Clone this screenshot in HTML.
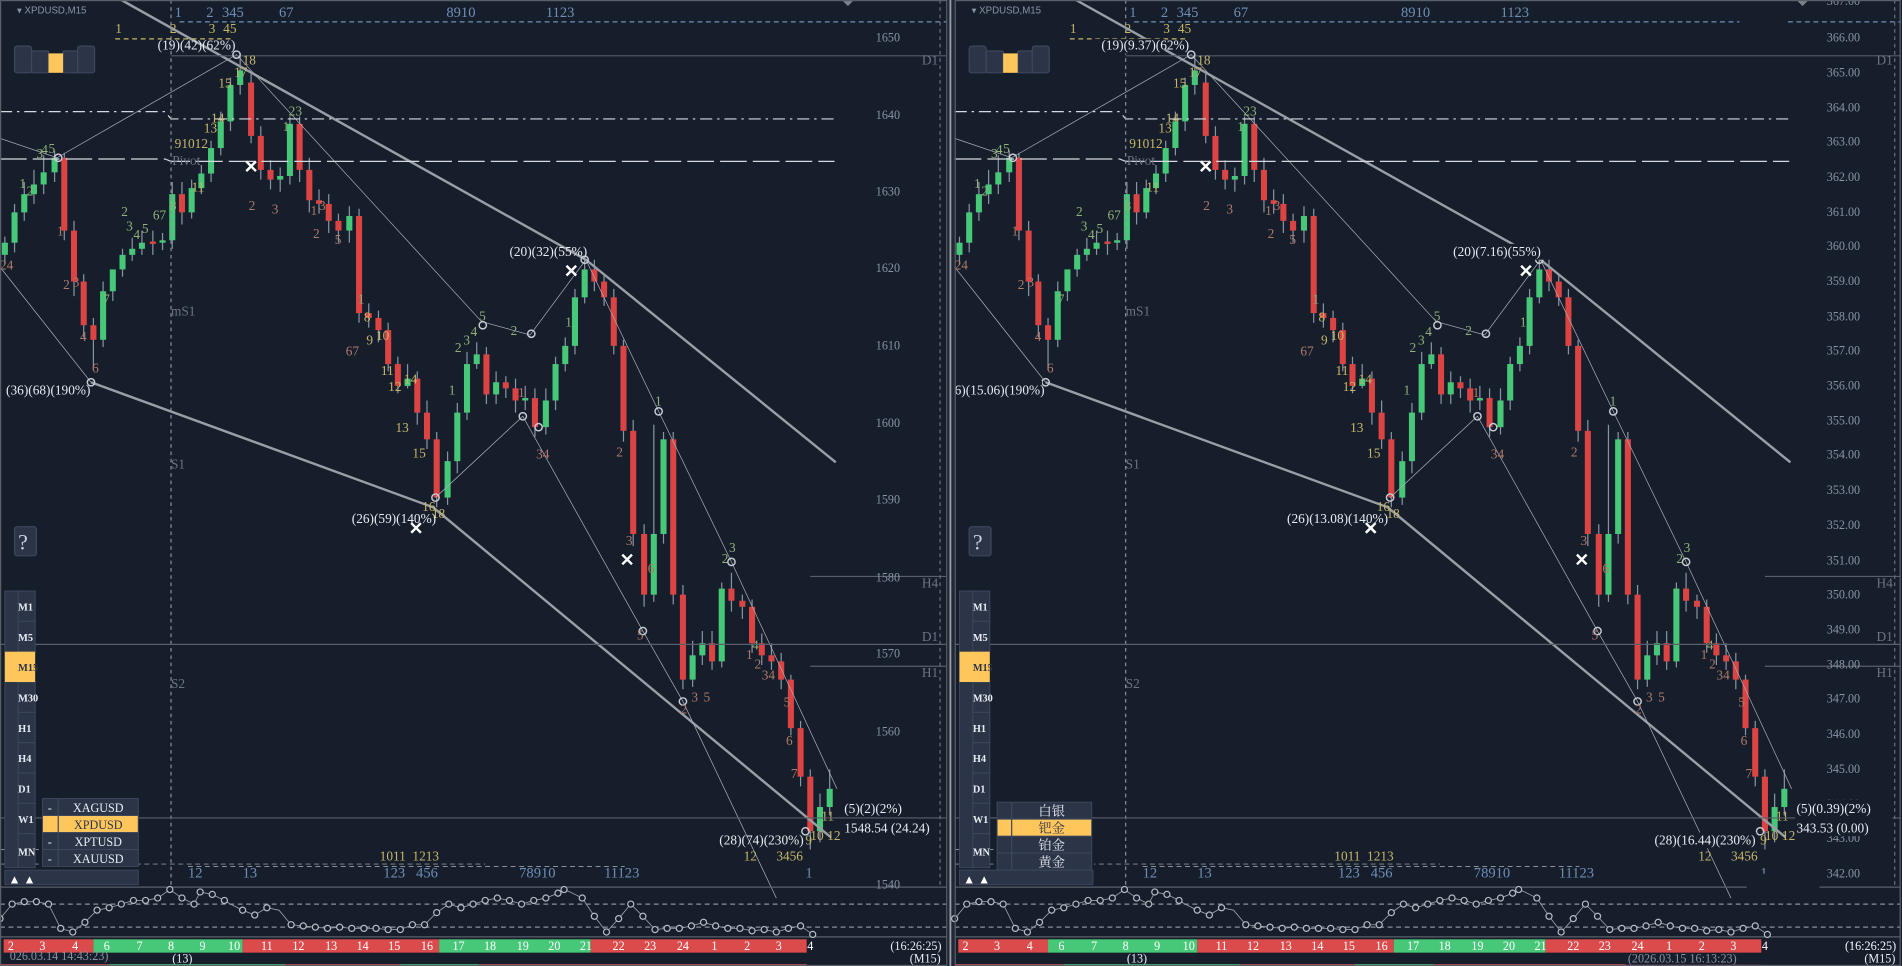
<!DOCTYPE html>
<html><head><meta charset="utf-8"><style>
html,body{margin:0;padding:0;background:#161e2b;overflow:hidden}
svg{display:block}
text{font-family:"Liberation Serif","Noto Serif CJK SC",serif}
.ax{fill:#8a93a6;font-size:10px}
.g{fill:#c8b66a;font-size:11px}
.gr{fill:#8fb27a;font-size:11px}
.r{fill:#b07a6a;font-size:11px}
.b{fill:#6f8fb7;font-size:12px}
.w{fill:#e8ecf3;font-size:11px}
.lbl{fill:#6d7585;font-size:11px}
</style></head><body>
<svg width="1902" height="966" viewBox="0 0 1568 796" preserveAspectRatio="none" xmlns="http://www.w3.org/2000/svg">
<defs>
<g id="cd">
<path stroke="#8a93a6" stroke-width="1" fill="none" d="M4 195V218M12 168V208M20 150V182M28 140V168M36 128V160M45 124V150M53 126V198M61 182V244M69 226V278M77 262V305M85 232V286M93 230V248M101 205V228M109 196V215M117 190V210M126 190V210M134 192V206M142 150V205M150 150V185M158 148V180M166 136V160M174 116V150M182 92V128M190 64V108M198 44V78M207 60V118M215 104V148M223 132V156M231 138V158M239 96V152M247 96V150M255 130V175M263 156V176M271 160V192M279 176V200M288 170V200M296 172V266M304 250V270M312 256V282M320 266V306M328 294V324M336 300V320M344 306V350M352 330V370M360 356V418M369 372V416M377 332V390M385 290V346M393 282V304M401 286V333M409 306V333M417 310V328M425 312V340M433 318V338M441 320V360M450 320V358M458 294V338M466 278V306M474 238V292M482 214V250M490 214V240M498 226V252M506 238V292M514 280V364M522 346V450M531 432V500M539 350V496M547 356V448M555 356V498M563 482V568M571 528V566M579 520V548M587 520V552M595 480V550M603 472V504M612 490V510M620 494V538M628 522V548M636 530V552M644 538V568M652 556V606M660 594V648M668 634V700M676 654V694M684 634V672"/>
<g fill="#47c878">
<rect x="1.5" y="200" width="5" height="10"/><rect x="9.5" y="175" width="5" height="25"/><rect x="17.5" y="160" width="5" height="15"/><rect x="25.5" y="152" width="5" height="8"/><rect x="33.5" y="142" width="5" height="10"/><rect x="42.5" y="130" width="5" height="12"/><rect x="82.5" y="240" width="5" height="40"/><rect x="90.5" y="222" width="5" height="18"/><rect x="98.5" y="210" width="5" height="12"/><rect x="106.5" y="205" width="5" height="5"/><rect x="114.5" y="200" width="5" height="5"/><rect x="131.5" y="198" width="5" height="2"/><rect x="139.5" y="160" width="5" height="38"/><rect x="155.5" y="155" width="5" height="20"/><rect x="163.5" y="143" width="5" height="12"/><rect x="171.5" y="122" width="5" height="21"/><rect x="179.5" y="100" width="5" height="22"/><rect x="187.5" y="70" width="5" height="30"/><rect x="195.5" y="58" width="5" height="12"/><rect x="228.5" y="145" width="5" height="3"/><rect x="236.5" y="102" width="5" height="43"/><rect x="285.5" y="178" width="5" height="12"/><rect x="333.5" y="312" width="5" height="6"/><rect x="366.5" y="380" width="5" height="30"/><rect x="374.5" y="340" width="5" height="40"/><rect x="382.5" y="300" width="5" height="40"/><rect x="390.5" y="292" width="5" height="8"/><rect x="406.5" y="315" width="5" height="10"/><rect x="430.5" y="328" width="5" height="2"/><rect x="447.5" y="330" width="5" height="22"/><rect x="455.5" y="300" width="5" height="30"/><rect x="463.5" y="285" width="5" height="15"/><rect x="471.5" y="245" width="5" height="40"/><rect x="479.5" y="222" width="5" height="23"/><rect x="536.5" y="440" width="5" height="50"/><rect x="544.5" y="362" width="5" height="78"/><rect x="568.5" y="540" width="5" height="20"/><rect x="576.5" y="530" width="5" height="10"/><rect x="592.5" y="485" width="5" height="60"/><rect x="673.5" y="665" width="5" height="20"/><rect x="681.5" y="650" width="5" height="15"/>
</g>
<g fill="#dc4343">
<rect x="50.5" y="130" width="5" height="60"/><rect x="58.5" y="190" width="5" height="42"/><rect x="66.5" y="232" width="5" height="36"/><rect x="74.5" y="268" width="5" height="12"/><rect x="123.5" y="199" width="5" height="2"/><rect x="147.5" y="160" width="5" height="15"/><rect x="204.5" y="68" width="5" height="44"/><rect x="212.5" y="112" width="5" height="28"/><rect x="220.5" y="140" width="5" height="8"/><rect x="244.5" y="102" width="5" height="38"/><rect x="252.5" y="140" width="5" height="25"/><rect x="260.5" y="165" width="5" height="3"/><rect x="268.5" y="168" width="5" height="14"/><rect x="276.5" y="182" width="5" height="8"/><rect x="293.5" y="178" width="5" height="80"/><rect x="301.5" y="258" width="5" height="4"/><rect x="309.5" y="262" width="5" height="10"/><rect x="317.5" y="272" width="5" height="28"/><rect x="325.5" y="300" width="5" height="18"/><rect x="341.5" y="312" width="5" height="28"/><rect x="349.5" y="340" width="5" height="22"/><rect x="357.5" y="362" width="5" height="48"/><rect x="398.5" y="292" width="5" height="33"/><rect x="414.5" y="315" width="5" height="5"/><rect x="422.5" y="320" width="5" height="10"/><rect x="438.5" y="328" width="5" height="24"/><rect x="487.5" y="222" width="5" height="10"/><rect x="495.5" y="232" width="5" height="13"/><rect x="503.5" y="245" width="5" height="40"/><rect x="511.5" y="285" width="5" height="70"/><rect x="519.5" y="355" width="5" height="85"/><rect x="528.5" y="440" width="5" height="50"/><rect x="552.5" y="362" width="5" height="128"/><rect x="560.5" y="490" width="5" height="70"/><rect x="584.5" y="530" width="5" height="15"/><rect x="600.5" y="485" width="5" height="10"/><rect x="609.5" y="495" width="5" height="5"/><rect x="617.5" y="500" width="5" height="30"/><rect x="625.5" y="530" width="5" height="10"/><rect x="633.5" y="540" width="5" height="5"/><rect x="641.5" y="545" width="5" height="15"/><rect x="649.5" y="560" width="5" height="40"/><rect x="657.5" y="600" width="5" height="40"/><rect x="665.5" y="640" width="5" height="45"/>
</g>
<!-- shared overlays -->
<g fill="none">
<path stroke="#9a9ea6" stroke-width="2" d="M100 0L483 214L689 381M75 315L357 418L685 690"/>
<path stroke="#a8acb4" stroke-width="0.6" d="M0 114L47 130L195 45L397 265L437 276L483 214L543 339L603 463L690 650M0 220L75 315M359 410L431 343L530 520L563 578L640 740"/>
<path stroke="#d6d9df" stroke-width="1" stroke-dasharray="10,4,2,4" d="M0 92H136L141 98H688"/>
<path stroke="#d6d9df" stroke-width="1" stroke-dasharray="22,5" d="M0 131H136L141 133H688"/>
<path stroke="#8a909a" stroke-width="1" stroke-dasharray="3,3" d="M141 0V730"/>
<path stroke="#6f8fb7" stroke-width="1" stroke-dasharray="4,3" d="M148 18H780"/>
<path stroke="#c8b66a" stroke-width="1" stroke-dasharray="4,3" d="M95 32H190"/>
<path stroke="#555b66" stroke-width="1" d="M141 46H780"/>
<path stroke="#8a909a" stroke-width="0.8" stroke-dasharray="4,3" d="M0 700H100M0 712H400M155 714H515"/>
</g>
<g fill="none" stroke="#c8ccd4" stroke-width="1.2">
<circle cx="48" cy="130" r="3"/><circle cx="195" cy="45" r="3"/><circle cx="75" cy="315" r="3"/><circle cx="398" cy="268" r="3"/><circle cx="438" cy="275" r="3"/><circle cx="431" cy="343" r="3"/><circle cx="482" cy="214" r="3"/><circle cx="543" cy="339" r="3"/><circle cx="563" cy="578" r="3"/><circle cx="603" cy="463" r="3"/><circle cx="530" cy="520" r="3"/><circle cx="664" cy="685" r="3"/><circle cx="444" cy="352" r="3"/><circle cx="359" cy="410" r="3"/>
</g>
<g stroke="#ffffff" stroke-width="2">
<path d="M203 133l8 8M211 133l-8 8M339 431l8 8M347 431l-8 8M467 219l8 8M475 219l-8 8M513 457l8 8M521 457l-8 8"/>
</g>
<g>
<text x="95" y="27" class="g">1</text><text x="140" y="27" class="g">2</text><text x="172" y="27" class="g">3</text><text x="184" y="27" class="g">45</text>
<text x="144" y="14" class="b">1</text><text x="170" y="14" class="b">2</text><text x="183" y="14" class="b">345</text><text x="230" y="14" class="b">67</text><text x="368" y="14" class="b">8910</text><text x="450" y="14" class="b">1123</text>
<text x="200" y="53" class="g">18</text><text x="193" y="63" class="g">17</text><text x="180" y="72" class="g">15</text><text x="174" y="101" class="g">14</text><text x="168" y="109" class="g">13</text><text x="144" y="122" class="g">91012</text><text x="158" y="158" class="g">11</text><text x="140" y="173" class="gr">8</text>
<text x="238" y="95" class="gr">23</text><text x="233" y="108" class="gr">1</text><text x="256" y="177" class="r">1</text><text x="258" y="196" class="r">2</text><text x="276" y="201" class="r">5</text><text x="224" y="176" class="r">3</text><text x="263" y="173" class="r">3</text><text x="205" y="173" class="r">2</text>
<text x="30" y="130" class="gr">3</text><text x="34" y="127" class="gr">4</text><text x="40" y="126" class="gr">5</text><text x="16" y="155" class="gr">1</text><text x="22" y="161" class="gr">2</text><text x="47" y="194" class="r">1</text><text x="52" y="238" class="r">2</text><text x="60" y="236" class="r">3</text><text x="66" y="281" class="r">4</text><text x="76" y="307" class="r">6</text><text x="85" y="250" class="gr">7</text><text x="100" y="178" class="gr">2</text><text x="104" y="190" class="gr">3</text><text x="110" y="197" class="gr">4</text><text x="117" y="192" class="gr">5</text><text x="126" y="181" class="gr">67</text><text x="0" y="222" class="r">24</text>
<text x="285" y="293" class="r">67</text><text x="295" y="250" class="gr">1</text><text x="300" y="265" class="g">8</text><text x="310" y="280" class="g">10</text><text x="302" y="284" class="g">9</text><text x="314" y="309" class="g">11</text><text x="320" y="322" class="g">12</text><text x="333" y="316" class="g">14</text><text x="326" y="356" class="g">13</text><text x="340" y="377" class="g">15</text><text x="348" y="421" class="g">16</text><text x="356" y="427" class="g">18</text>
<text x="370" y="325" class="gr">1</text><text x="375" y="290" class="gr">2</text><text x="382" y="284" class="gr">3</text><text x="388" y="277" class="gr">4</text><text x="395" y="264" class="gr">5</text><text x="421" y="276" class="gr">2</text><text x="466" y="269" class="gr">1</text><text x="442" y="378" class="r">34</text><text x="427" y="327" class="r">1</text><text x="508" y="376" class="r">2</text><text x="516" y="449" class="r">3</text><text x="525" y="527" class="r">5</text><text x="534" y="472" class="r">6</text><text x="540" y="334" class="gr">1</text><text x="595" y="464" class="gr">2</text><text x="601" y="455" class="gr">3</text><text x="561" y="588" class="r">2</text><text x="580" y="578" class="r">5</text><text x="570" y="578" class="r">3</text><text x="615" y="543" class="r">1</text><text x="622" y="551" class="r">2</text><text x="628" y="560" class="r">34</text><text x="620" y="535" class="gr">4</text><text x="646" y="582" class="r">5</text><text x="648" y="614" class="r">6</text><text x="652" y="641" class="r">7</text>
<text x="668" y="692" class="g">10</text><text x="682" y="692" class="g">12</text><text x="677" y="676" class="g">11</text><text x="664" y="696" class="g">9</text>
<text x="313" y="709" class="g">1011</text><text x="340" y="709" class="g">1213</text><text x="613" y="709" class="g">12</text><text x="640" y="709" class="g">3456</text>
<text x="155" y="723" class="b">12</text><text x="200" y="723" class="b">13</text><text x="316" y="723" class="b">123</text><text x="343" y="723" class="b">456</text><text x="428" y="723" class="b">78910</text><text x="498" y="723" class="b">11123</text><text x="664" y="723" class="b">1</text>
<text x="141" y="260" class="lbl">mS1</text><text x="141" y="386" class="lbl">S1</text><text x="141" y="567" class="lbl">S2</text><text x="142" y="136" class="lbl">Pivot</text>
</g>
<!-- pane chrome -->
<g>
<path stroke="#5a606a" fill="none" d="M668 475H780M0 531H780M668 549H780M0 674H780"/>
<text x="760" y="53" class="lbl" font-size="9">D1</text><text x="760" y="484" class="lbl" font-size="9">H4</text><text x="760" y="528" class="lbl" font-size="9">D1</text><text x="760" y="558" class="lbl" font-size="9">H1</text>
<path stroke="#6a707a" stroke-dasharray="3,3" d="M775 0V730"/>
<g fill="#2c3548" stroke="#3d475c"><rect x="12" y="38" width="14" height="22" rx="2"/><rect x="26" y="42" width="14" height="18" rx="1"/><rect x="52" y="42" width="14" height="18" rx="1"/><rect x="64" y="38" width="14" height="22" rx="2"/></g>
<rect x="40" y="44" width="12" height="16" fill="#ffc65c"/>
<rect x="12" y="434" width="18" height="24" rx="2" fill="#2c3548" stroke="#3d475c"/><text x="15" y="453" fill="#c9d2e0" font-size="18">?</text>
<g fill="#2c3548" stroke="#3d475c" stroke-width="0.8">
<rect x="4" y="487" width="11" height="228"/><rect x="15" y="487" width="14" height="25"/><rect x="15" y="512" width="14" height="25"/><rect x="15" y="562" width="14" height="25"/><rect x="15" y="587" width="14" height="25"/><rect x="15" y="612" width="14" height="25"/><rect x="15" y="637" width="14" height="25"/><rect x="15" y="662" width="14" height="25"/><rect x="15" y="687" width="14" height="28"/>
</g>
<rect x="4" y="537" width="25" height="25" fill="#ffc65c"/>
<g fill="#e8ecf3" font-size="8.5" font-weight="bold"><text x="15" y="503">M1</text><text x="15" y="528">M5</text><text x="15" y="553" fill="#2c3548">M15</text><text x="15" y="578">M30</text><text x="15" y="603">H1</text><text x="15" y="628">H4</text><text x="15" y="653">D1</text><text x="15" y="678">W1</text><text x="15" y="705">MN</text></g>
<g fill="#2c3548" stroke="#3d475c" stroke-width="0.8"><rect x="4" y="717" width="110" height="12"/></g>
<text x="7" y="728" fill="#fff" font-size="10">▲ ▲</text>
</g>
<!-- oscillator -->
<g>
<path stroke="#5a606a" fill="none" d="M0 731H780M0 772H780"/>
<path stroke="#8a909a" stroke-dasharray="4,3" fill="none" d="M0 745H780M0 764H780"/>
<polyline fill="none" stroke="#9aa0aa" stroke-width="0.7" points="0,757 10,745 20,743 30,743 40,745 50,765 60,768 70,760 80,750 90,748 100,745 110,742 120,742 130,740 140,733 150,740 160,745 165,735 175,737 185,742 190,745 200,750 210,754 220,748 230,750 240,762 250,763 260,764 270,765 280,764 290,765 300,765 310,765 320,766 330,766 340,762 350,762 360,752 370,745 380,748 390,745 400,742 410,740 420,742 430,745 440,742 450,740 460,736 465,733 470,735 480,740 490,755 500,768 510,757 520,745 530,755 540,766 550,765 560,765 570,763 580,760 590,763 600,765 610,765 620,767 630,766 640,768 650,765 660,763 670,770"/>
<g fill="#161e2b" stroke="#b8bcc4" stroke-width="1">
<circle cx="0" cy="757" r="2.5"/><circle cx="10" cy="745" r="2.5"/><circle cx="20" cy="743" r="2.5"/><circle cx="30" cy="743" r="2.5"/><circle cx="40" cy="745" r="2.5"/><circle cx="50" cy="765" r="2.5"/><circle cx="60" cy="768" r="2.5"/><circle cx="70" cy="760" r="2.5"/><circle cx="80" cy="750" r="2.5"/><circle cx="90" cy="748" r="2.5"/><circle cx="100" cy="745" r="2.5"/><circle cx="110" cy="742" r="2.5"/><circle cx="120" cy="742" r="2.5"/><circle cx="130" cy="740" r="2.5"/><circle cx="140" cy="733" r="2.5"/><circle cx="150" cy="740" r="2.5"/><circle cx="160" cy="745" r="2.5"/><circle cx="165" cy="735" r="2.5"/><circle cx="175" cy="737" r="2.5"/><circle cx="185" cy="742" r="2.5"/><circle cx="200" cy="750" r="2.5"/><circle cx="210" cy="754" r="2.5"/><circle cx="220" cy="748" r="2.5"/><circle cx="240" cy="762" r="2.5"/><circle cx="250" cy="763" r="2.5"/><circle cx="260" cy="764" r="2.5"/><circle cx="270" cy="765" r="2.5"/><circle cx="280" cy="764" r="2.5"/><circle cx="290" cy="765" r="2.5"/><circle cx="300" cy="765" r="2.5"/><circle cx="310" cy="765" r="2.5"/><circle cx="320" cy="766" r="2.5"/><circle cx="330" cy="766" r="2.5"/><circle cx="340" cy="762" r="2.5"/><circle cx="350" cy="762" r="2.5"/><circle cx="360" cy="752" r="2.5"/><circle cx="370" cy="745" r="2.5"/><circle cx="380" cy="748" r="2.5"/><circle cx="390" cy="745" r="2.5"/><circle cx="400" cy="742" r="2.5"/><circle cx="410" cy="740" r="2.5"/><circle cx="420" cy="742" r="2.5"/><circle cx="430" cy="745" r="2.5"/><circle cx="440" cy="742" r="2.5"/><circle cx="450" cy="740" r="2.5"/><circle cx="460" cy="736" r="2.5"/><circle cx="465" cy="733" r="2.5"/><circle cx="480" cy="740" r="2.5"/><circle cx="490" cy="755" r="2.5"/><circle cx="500" cy="768" r="2.5"/><circle cx="510" cy="757" r="2.5"/><circle cx="520" cy="745" r="2.5"/><circle cx="530" cy="755" r="2.5"/><circle cx="540" cy="766" r="2.5"/><circle cx="550" cy="765" r="2.5"/><circle cx="560" cy="765" r="2.5"/><circle cx="570" cy="763" r="2.5"/><circle cx="580" cy="760" r="2.5"/><circle cx="590" cy="763" r="2.5"/><circle cx="600" cy="765" r="2.5"/><circle cx="610" cy="765" r="2.5"/><circle cx="620" cy="767" r="2.5"/><circle cx="630" cy="766" r="2.5"/><circle cx="640" cy="768" r="2.5"/><circle cx="650" cy="765" r="2.5"/><circle cx="660" cy="763" r="2.5"/><circle cx="670" cy="770" r="2.5"/>
</g>
</g>
<!-- time bar -->
<g>
<rect x="3" y="774" width="74" height="11" fill="#dc4b4b"/><rect x="77" y="774" width="123" height="11" fill="#47c878"/><rect x="200" y="774" width="162" height="11" fill="#dc4b4b"/><rect x="362" y="774" width="125" height="11" fill="#47c878"/><rect x="487" y="774" width="178" height="11" fill="#dc4b4b"/>
<g fill="#fff" font-size="10" text-anchor="middle"><text x="9" y="783">2</text><text x="35" y="783">3</text><text x="62" y="783">4</text><text x="88" y="783">6</text><text x="115" y="783">7</text><text x="141" y="783">8</text><text x="167" y="783">9</text><text x="193" y="783">10</text><text x="220" y="783">11</text><text x="246" y="783">12</text><text x="273" y="783">13</text><text x="299" y="783">14</text><text x="325" y="783">15</text><text x="352" y="783">16</text><text x="378" y="783">17</text><text x="404" y="783">18</text><text x="431" y="783">19</text><text x="457" y="783">20</text><text x="483" y="783">21</text><text x="510" y="783">22</text><text x="536" y="783">23</text><text x="563" y="783">24</text><text x="589" y="783">1</text><text x="616" y="783">2</text><text x="642" y="783">3</text><text x="668" y="783">4</text></g>
<text x="734" y="783" fill="#e8ecf3" font-size="10">(16:26:25)</text>
<text x="142" y="793" fill="#e8ecf3" font-size="10">(13)</text>
<text x="750" y="793" fill="#e8ecf3" font-size="10">(M15)</text>
<path stroke="#dc4b4b" d="M0 795H90M235 795H330M395 795H665"/><path stroke="#47c878" d="M90 795H235M330 795H395"/>
</g>
</g>
</defs>

<rect width="1568" height="796" fill="#161e2b"/>
<use href="#cd"/>
<g class="ax">
<text x="722" y="34">1650</text><text x="722" y="98">1640</text><text x="722" y="161">1630</text><text x="722" y="224">1620</text><text x="722" y="288">1610</text><text x="722" y="352">1600</text><text x="722" y="415">1590</text><text x="722" y="479">1580</text><text x="722" y="542">1570</text><text x="722" y="606">1560</text><text x="722" y="732">1540</text>
</g>
<text x="14" y="11" fill="#8a93a6" font-size="8" style="font-family:'Liberation Sans',sans-serif">▾ XPDUSD,M15</text>
<text x="130" y="41" class="w">(19)(42)(62%)</text>
<text x="5" y="325" class="w">(36)(68)(190%)</text>
<text x="290" y="431" class="w">(26)(59)(140%)</text>
<text x="420" y="211" class="w">(20)(32)(55%)</text>
<text x="593" y="696" class="w">(28)(74)(230%)</text>
<text x="696" y="670" class="w">(5)(2)(2%)</text>
<text x="696" y="686" class="w" font-size="12">1548.54 (24.24)</text>
<text x="8" y="791" fill="#8a93a6" font-size="10">026.03.14 14:43:23)</text>
<g fill="#2c3548" stroke="#3d475c" stroke-width="0.8"><rect x="35" y="658" width="79" height="14"/><rect x="35" y="686" width="79" height="14"/><rect x="35" y="700" width="79" height="14"/></g>
<rect x="35" y="672" width="79" height="14" fill="#ffc65c" stroke="#3d475c" stroke-width="0.8"/>
<path stroke="#3d475c" d="M48 658V714"/>
<g font-size="10" text-anchor="middle" fill="#e8ecf3"><text x="81" y="669">XAGUSD</text><text x="81" y="683" fill="#2c3548">XPDUSD</text><text x="81" y="697">XPTUSD</text><text x="81" y="711">XAUUSD</text><text x="41" y="669">-</text><text x="41" y="697">-</text><text x="41" y="711">-</text></g>
<path fill="#7a818c" d="M694 0l5 5 5-5z"/>
<rect x="0.5" y="0.5" width="780" height="795" fill="none" stroke="#5a606a"/>

<rect x="781" y="0" width="6" height="796" fill="#202836"/>
<path stroke="#9aa0aa" stroke-width="1.5" d="M783.5 0V796"/>

<g transform="translate(787,0)"><use href="#cd"/></g>
<g class="ax" font-size="9.5">
<text x="1506" y="4">367.00</text><text x="1506" y="34">366.00</text><text x="1506" y="63">365.00</text><text x="1506" y="92">364.00</text><text x="1506" y="120">363.00</text><text x="1506" y="149">362.00</text><text x="1506" y="178">361.00</text><text x="1506" y="206">360.00</text><text x="1506" y="235">359.00</text><text x="1506" y="264">358.00</text><text x="1506" y="292">357.00</text><text x="1506" y="321">356.00</text><text x="1506" y="350">355.00</text><text x="1506" y="378">354.00</text><text x="1506" y="407">353.00</text><text x="1506" y="436">352.00</text><text x="1506" y="465">351.00</text><text x="1506" y="493">350.00</text><text x="1506" y="522">349.00</text><text x="1506" y="551">348.00</text><text x="1506" y="579">347.00</text><text x="1506" y="608">346.00</text><text x="1506" y="637">345.00</text><text x="1506" y="666">344.00</text><text x="1506" y="694">343.00</text><text x="1506" y="723">342.00</text>
</g>
<rect x="1434" y="4" width="40" height="16" fill="#161e2b"/>
<text x="801" y="11" fill="#8a93a6" font-size="8" style="font-family:'Liberation Sans',sans-serif">▾ XPDUSD,M15</text>
<rect x="900" y="32" width="60" height="12" fill="#161e2b"/><text x="908" y="41" class="w">(19)(9.37)(62%)</text>
<rect x="787" y="314" width="72" height="14" fill="#161e2b"/><text x="787" y="325" class="w">6)(15.06)(190%)</text>
<rect x="1060" y="421" width="84" height="13" fill="#161e2b"/><text x="1061" y="431" class="w">(26)(13.08)(140%)</text>
<path stroke="#fff" stroke-width="2" d="M1126 431l8 8M1134 431l-8 8"/>
<rect x="1195" y="201" width="80" height="13" fill="#161e2b"/><text x="1198" y="211" class="w">(20)(7.16)(55%)</text>
<rect x="1362" y="686" width="86" height="13" fill="#161e2b"/><text x="1364" y="696" class="w">(28)(16.44)(230%)</text>
<rect x="1480" y="659" width="80" height="30" fill="#161e2b"/>
<text x="1481" y="670" class="w">(5)(0.39)(2%)</text>
<text x="1481" y="686" class="w" font-size="12">343.53 (0.00)</text>
<rect x="1520" y="779" width="44" height="16" fill="#161e2b"/><text x="1521" y="783" fill="#e8ecf3" font-size="10">(16:26:25)</text><text x="1537" y="793" fill="#e8ecf3" font-size="10">(M15)</text>
<rect x="1340" y="786" width="170" height="9" fill="#161e2b"/><text x="1342" y="793" fill="#8a93a6" font-size="10">(2026.03.15 16:13:23)</text>
<rect x="1440" y="720" width="60" height="12" fill="#161e2b"/>
<rect x="822" y="710" width="80" height="20" fill="#161e2b"/>
<g fill="#2c3548" stroke="#3d475c" stroke-width="0.8"><rect x="822" y="661" width="78" height="14"/><rect x="822" y="689" width="78" height="14"/><rect x="822" y="703" width="78" height="14"/></g>
<rect x="822" y="675" width="78" height="14" fill="#ffc65c" stroke="#3d475c" stroke-width="0.8"/>
<path stroke="#3d475c" d="M834 661V717"/>
<g font-size="11" text-anchor="middle" fill="#e8ecf3" style="font-family:'Noto Sans CJK SC',sans-serif"><text x="867" y="672">白银</text><text x="867" y="686" fill="#2c3548">钯金</text><text x="867" y="700">铂金</text><text x="867" y="714">黄金</text></g>
<g fill="#2c3548" stroke="#3d475c" stroke-width="0.8"><rect x="791" y="717" width="110" height="12"/></g>
<text x="794" y="728" fill="#fff" font-size="10">▲ ▲</text>
<path fill="#7a818c" d="M1481 0l5 5 5-5z"/>
<rect x="787.5" y="0.5" width="779" height="795" fill="none" stroke="#5a606a"/>
</svg>
</body></html>
